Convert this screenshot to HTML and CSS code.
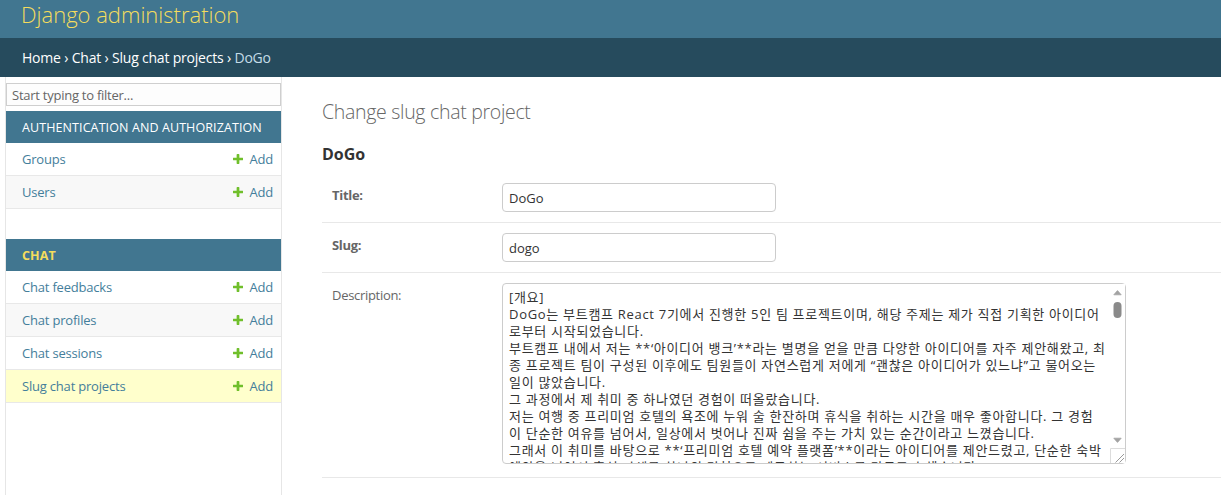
FILE: index.html
```html
<!DOCTYPE html>
<html lang="ko">
<head>
<meta charset="utf-8">
<title>Change slug chat project | Django site admin</title>
<link rel="stylesheet" href="styles.css">
</head>
<body>
<header class="header">
  <h1 class="site-name"><a class="site-link" href="#">Django administration</a></h1>
</header>
<nav class="breadcrumbs">
  <a class="crumb" href="#">Home</a>&nbsp;›&nbsp;<a class="crumb" href="#">Chat</a>&nbsp;›&nbsp;<a class="crumb" href="#">Slug chat projects</a>&nbsp;›&nbsp;<span class="crumb-current">DoGo</span>
</nav>
<div class="main">
  <div class="toggle-strip"></div>
  <aside class="sidebar">
    <input class="nav-filter" type="search" placeholder="Start typing to filter...">
    <div class="module">
      <div class="module-caption">Authentication and Authorization</div>
      <div class="model-row"><a class="model-link" href="#">Groups</a><a class="addlink" href="#"><svg class="plus" viewBox="192 188 1408 1408"><path fill="#70bf2b" d="M1600 796v192q0 40-28 68t-68 28h-416v416q0 40-28 68t-68 28h-192q-40 0-68-28t-28-68v-416h-416q-40 0-68-28t-28-68v-192q0-40 28-68t68-28h416v-416q0-40 28-68t68-28h192q40 0 68 28t28 68v416h416q40 0 68 28t28 68z"/></svg>Add</a></div>
      <div class="model-row alt"><a class="model-link" href="#">Users</a><a class="addlink" href="#"><svg class="plus" viewBox="192 188 1408 1408"><path fill="#70bf2b" d="M1600 796v192q0 40-28 68t-68 28h-416v416q0 40-28 68t-68 28h-192q-40 0-68-28t-28-68v-416h-416q-40 0-68-28t-28-68v-192q0-40 28-68t68-28h416v-416q0-40 28-68t68-28h192q40 0 68 28t28 68v416h416q40 0 68 28t28 68z"/></svg>Add</a></div>
    </div>
    <div class="module">
      <div class="module-caption current-app">Chat</div>
      <div class="model-row"><a class="model-link" href="#">Chat feedbacks</a><a class="addlink" href="#"><svg class="plus" viewBox="192 188 1408 1408"><path fill="#70bf2b" d="M1600 796v192q0 40-28 68t-68 28h-416v416q0 40-28 68t-68 28h-192q-40 0-68-28t-28-68v-416h-416q-40 0-68-28t-28-68v-192q0-40 28-68t68-28h416v-416q0-40 28-68t68-28h192q40 0 68 28t28 68v416h416q40 0 68 28t28 68z"/></svg>Add</a></div>
      <div class="model-row alt"><a class="model-link" href="#">Chat profiles</a><a class="addlink" href="#"><svg class="plus" viewBox="192 188 1408 1408"><path fill="#70bf2b" d="M1600 796v192q0 40-28 68t-68 28h-416v416q0 40-28 68t-68 28h-192q-40 0-68-28t-28-68v-416h-416q-40 0-68-28t-28-68v-192q0-40 28-68t68-28h416v-416q0-40 28-68t68-28h192q40 0 68 28t28 68v416h416q40 0 68 28t28 68z"/></svg>Add</a></div>
      <div class="model-row"><a class="model-link" href="#">Chat sessions</a><a class="addlink" href="#"><svg class="plus" viewBox="192 188 1408 1408"><path fill="#70bf2b" d="M1600 796v192q0 40-28 68t-68 28h-416v416q0 40-28 68t-68 28h-192q-40 0-68-28t-28-68v-416h-416q-40 0-68-28t-28-68v-192q0-40 28-68t68-28h416v-416q0-40 28-68t68-28h192q40 0 68 28t28 68v416h416q40 0 68 28t28 68z"/></svg>Add</a></div>
      <div class="model-row current-model"><a class="model-link" href="#">Slug chat projects</a><a class="addlink" href="#"><svg class="plus" viewBox="192 188 1408 1408"><path fill="#70bf2b" d="M1600 796v192q0 40-28 68t-68 28h-416v416q0 40-28 68t-68 28h-192q-40 0-68-28t-28-68v-416h-416q-40 0-68-28t-28-68v-192q0-40 28-68t68-28h416v-416q0-40 28-68t68-28h192q40 0 68 28t28 68v416h416q40 0 68 28t28 68z"/></svg>Add</a></div>
    </div>
  </aside>
  <main class="content">
    <h1 class="page-title">Change slug chat project</h1>
    <h2 class="object-title">DoGo</h2>
    <div class="form-row">
      <label class="field-label required" for="id_title">Title:</label>
      <input class="text-input" id="id_title" type="text" value="DoGo">
    </div>
    <div class="form-row">
      <label class="field-label required" for="id_slug">Slug:</label>
      <input class="text-input" id="id_slug" type="text" value="dogo">
    </div>
    <div class="form-row">
      <label class="field-label" for="id_description">Description:</label>
      <div class="textarea-wrap">
        <textarea class="desc-input" id="id_description" rows="10" cols="40" wrap="off">[개요]
DoGo는 부트캠프 React 7기에서 진행한 5인 팀 프로젝트이며, 해당 주제는 제가 직접 기획한 아이디어
로부터 시작되었습니다.
부트캠프 내에서 저는 **‘아이디어 뱅크’**라는 별명을 얻을 만큼 다양한 아이디어를 자주 제안해왔고, 최
종 프로젝트 팀이 구성된 이후에도 팀원들이 자연스럽게 저에게 “괜찮은 아이디어가 있느냐”고 물어오는
일이 많았습니다.
그 과정에서 제 취미 중 하나였던 경험이 떠올랐습니다.
저는 여행 중 프리미엄 호텔의 욕조에 누워 술 한잔하며 휴식을 취하는 시간을 매우 좋아합니다. 그 경험
이 단순한 여유를 넘어서, 일상에서 벗어나 진짜 쉼을 주는 가치 있는 순간이라고 느꼈습니다.
그래서 이 취미를 바탕으로 **‘프리미엄 호텔 예약 플랫폼’**이라는 아이디어를 제안드렸고, 단순한 숙박
예약을 넘어서 휴식 자체를 하나의 경험으로 제공하는 서비스를 만들고자 했습니다.</textarea>
        <svg class="fake-scrollbar" viewBox="0 0 15 179" aria-hidden="true">
          <rect x="0" y="0" width="15" height="179" fill="#fff"/>
          <polygon points="3.8,10.8 11.2,10.8 7.5,6.6" fill="#a3a3a3" stroke="#a3a3a3" stroke-width="0.8" stroke-linejoin="round"/>
          <rect x="3.5" y="18" width="8" height="16" rx="4" fill="#8a8a8a"/>
          <polygon points="3.8,154.2 11.2,154.2 7.5,158.4" fill="#a3a3a3" stroke="#a3a3a3" stroke-width="0.8" stroke-linejoin="round"/>
          <path d="M0.5 179V164.5H15" fill="none" stroke="#dcdcdc" stroke-width="1"/>
          <path d="M5.5 178.5L14 170M9.5 178.5L14 174" fill="none" stroke="#8f8f8f" stroke-width="0.9"/>
        </svg>
      </div>
    </div>
  </main>
</div>
</body>
</html>
```

FILE: styles.css
```css
* { box-sizing: border-box; }
html, body { margin: 0; padding: 0; }
body {
  font-family: "Open Sans", "Noto Sans CJK KR", sans-serif;
  font-size: 14px;
  color: #333;
  background: #fff;
  width: 1221px;
  height: 495px;
  overflow: hidden;
}
a { text-decoration: none; }

.header {
  height: 38px;
  background: #417690;
  padding: 1px 0 0 21px;
}
.site-name {
  margin: 0;
  font-size: 22px;
  line-height: 26px;
  font-weight: 300;
}
.site-link { color: #f5dd5d; }

.breadcrumbs {
  height: 39px;
  background: #264b5d;
  color: #fff;
  display: flex;
  align-items: center;
  padding: 0 22px;
  font-size: 14px;
  letter-spacing: -0.2px;
}
.crumb { color: #fff; }
.crumb-current { color: #c4dce8; }

.main {
  display: flex;
  height: 418px;
}
.toggle-strip {
  flex: none;
  width: 6px;
  border-right: 1px solid #e6e6e6;
}
.sidebar {
  flex: none;
  width: 276px;
  border-right: 1px solid #e6e6e6;
}
.nav-filter {
  display: block;
  width: 100%;
  height: 23px;
  margin: 6px 0 5px;
  padding: 2px 5px;
  border: 1px solid #cfcfcf;
  background: #fdfdfd;
  font-family: "Open Sans", sans-serif;
  font-size: 13px;
  letter-spacing: -0.25px;
  color: #333;
}
.nav-filter::placeholder { color: #666; }

.module { margin-bottom: 30px; }
.module-caption {
  height: 32px;
  display: flex;
  align-items: center;
  padding-left: 16px;
  background: #417690;
  color: #fff;
  font-size: 12.5px;
  letter-spacing: 0.1px;
  text-transform: uppercase;
  white-space: nowrap;
}
.module-caption.current-app {
  color: #f5dd5d;
  font-weight: 700;
}
.model-row {
  height: 33px;
  display: flex;
  align-items: center;
  justify-content: space-between;
  padding: 0 8px 0 16px;
  border-bottom: 1px solid #e8e8e8;
  font-size: 13px;
  letter-spacing: -0.2px;
}
.model-row.alt { background: #f8f8f8; }
.model-row.current-model { background: #ffffcc; }
.model-link { color: #447e9b; }
.addlink {
  color: #447e9b;
  display: flex;
  align-items: center;
  gap: 6px;
}
.plus {
  width: 10px;
  height: 10px;
  margin-top: -1px;
}

.content {
  flex: 1;
  min-width: 0;
  padding: 0 0 0 40px;
}
.page-title {
  margin: 23px 0 20px;
  font-size: 19.5px;
  line-height: 24px;
  font-weight: 300;
  letter-spacing: -0.3px;
  color: #666;
}
.object-title {
  margin: 0 0 9px;
  font-size: 16px;
  line-height: 20px;
  font-weight: 700;
  color: #333;
}
.form-row {
  display: flex;
  align-items: flex-start;
  padding: 10px;
  border-bottom: 1px solid #e8e8e8;
}
.field-label {
  flex: none;
  width: 170px;
  padding: 4px 10px 0 0;
  font-size: 13px;
  line-height: 17px;
  letter-spacing: -0.3px;
  color: #666;
}
.field-label.required { font-weight: 700; }
.text-input {
  width: 274px;
  height: 29px;
  margin: 0;
  padding: 5px 6px;
  border: 1px solid #ccc;
  border-radius: 4px;
  font-family: "Open Sans", "Noto Sans CJK KR", sans-serif;
  font-size: 13px;
  line-height: 17px;
  color: #333;
}
.textarea-wrap {
  position: relative;
  margin-bottom: 3px;
}
.desc-input {
  display: block;
  width: 624px;
  height: 181px;
  margin: 0;
  padding: 5px 21px 5px 6px;
  border: 1px solid #ccc;
  border-radius: 4px;
  font-family: "Open Sans", "Noto Sans CJK KR", sans-serif;
  font-size: 13px;
  line-height: 17px;
  letter-spacing: 0.7px;
  color: #333;
  white-space: pre;
  overflow: hidden;
  resize: both;
}
.fake-scrollbar {
  position: absolute;
  top: 1px;
  right: 1px;
  width: 15px;
  height: 179px;
  pointer-events: none;
}
```
